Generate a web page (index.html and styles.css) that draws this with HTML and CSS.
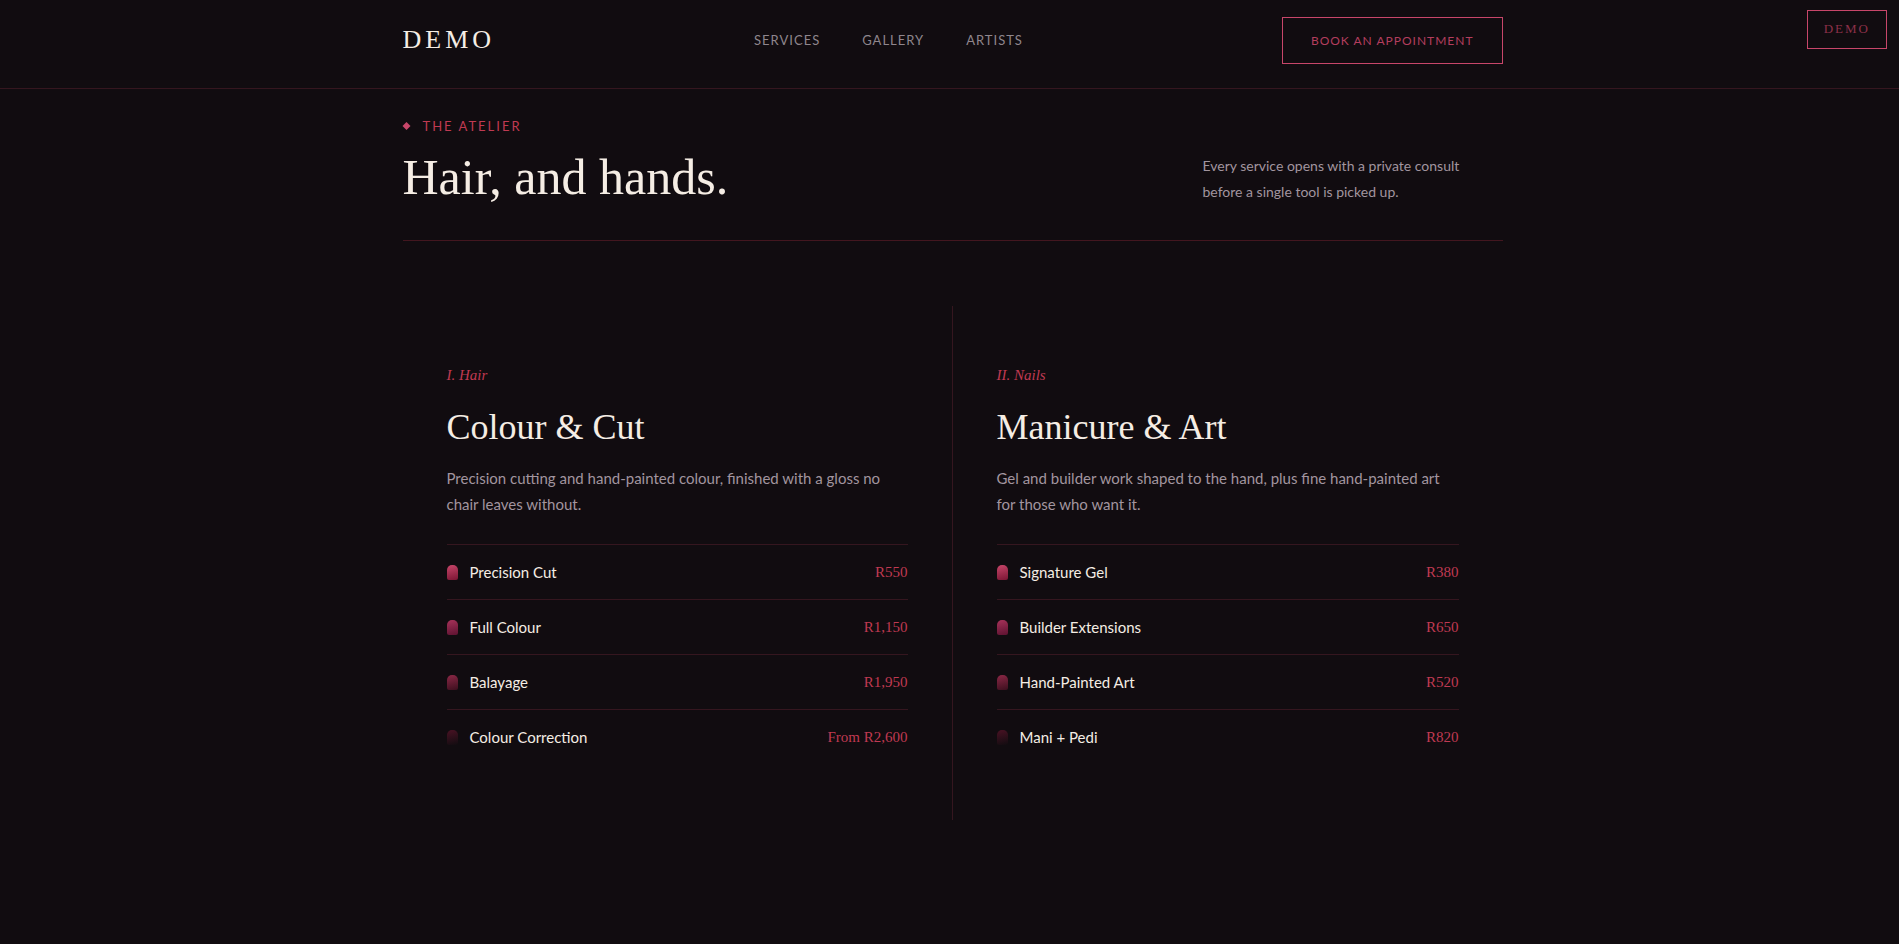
FILE: index.html
```html
<!DOCTYPE html>
<html lang="en">
<head>
<meta charset="utf-8">
<meta name="viewport" content="width=device-width, initial-scale=1">
<title>Demo - Services</title>
<link rel="stylesheet" href="styles.css">
</head>
<body>
<header class="site-header">
  <div class="wrap nav">
    <a class="logo" href="#">DEMO</a>
    <nav class="nav-links">
      <a href="#services">Services</a>
      <a href="#gallery">Gallery</a>
      <a href="#artists">Artists</a>
    </nav>
    <button type="button" class="btn">Book an appointment</button>
  </div>
</header>
<div class="demo-tag">DEMO</div>

<main class="wrap" id="services">
  <div class="section-head">
    <div>
      <p class="eyebrow"><svg width="8" height="8" viewBox="0 0 8 8"><path d="M3.500 0l4 4-4 4-4-4z"/></svg>The Atelier</p>
      <h1>Hair, and hands.</h1>
    </div>
    <p class="intro">Every service opens with a private consult before a single tool is picked up.</p>
  </div>

  <div class="columns">
    <section class="col">
      <p class="num">I. Hair</p>
      <h2>Colour &amp; Cut</h2>
      <p class="desc">Precision cutting and hand-painted colour, finished with a gloss no chair leaves without.</p>
      <ul class="prices">
        <li><span class="nail n1"></span><span class="name">Precision Cut</span><span class="price">R550</span></li>
        <li><span class="nail n2"></span><span class="name">Full Colour</span><span class="price">R1,150</span></li>
        <li><span class="nail n3"></span><span class="name">Balayage</span><span class="price">R1,950</span></li>
        <li><span class="nail n4"></span><span class="name">Colour Correction</span><span class="price">From R2,600</span></li>
      </ul>
    </section>
    <section class="col">
      <p class="num">II. Nails</p>
      <h2>Manicure &amp; Art</h2>
      <p class="desc">Gel and builder work shaped to the hand, plus fine hand-painted art for those who want it.</p>
      <ul class="prices">
        <li><span class="nail n1"></span><span class="name">Signature Gel</span><span class="price">R380</span></li>
        <li><span class="nail n2"></span><span class="name">Builder Extensions</span><span class="price">R650</span></li>
        <li><span class="nail n3"></span><span class="name">Hand-Painted Art</span><span class="price">R520</span></li>
        <li><span class="nail n4"></span><span class="name">Mani + Pedi</span><span class="price">R820</span></li>
      </ul>
    </section>
  </div>
</main>
</body>
</html>
```
FILE: styles.css
```css
:root{
  --bg:#110c10;
  --cream:#f5ede4;
  --muted:#a2959f;
  --rose:#c8466a;
  --red:#c03a52;
  --line:#35161f;
  --serif:"Liberation Serif", serif;
  --sans:Lato, sans-serif;
}
*{ box-sizing:border-box; margin:0; padding:0;}
body{ background:var(--bg); color:var(--cream); font-family:var(--sans); font-size:15px; line-height:26px;}
a{ color:inherit; text-decoration:none;}
ul{ list-style:none;}
.wrap{ max-width:1106px; margin:0 auto; padding-left:6px;}

/* header */
.site-header{ border-bottom:1px solid var(--line);}
.nav{ display:flex; justify-content:space-between; align-items:center; height:88px; padding-bottom:8px;}
.logo{ font-family:var(--serif); font-size:26px; letter-spacing:4px;}
.nav-links{ display:flex; gap:42px; font-size:13px; letter-spacing:1px; text-transform:uppercase; color:#8f868d;}
.btn{ height:47px; padding:0 28px; background:none; border:1px solid var(--rose); color:#b43e5e; font-family:var(--sans); font-size:12px; letter-spacing:1px; text-transform:uppercase; cursor:pointer;}
.demo-tag{ position:absolute; top:10px; right:12px; height:39px; padding:0 16px; border:1px solid var(--rose); color:#8c3049; font-family:var(--serif); font-size:13px; line-height:36px; letter-spacing:2px;}

/* section head */
.section-head{ display:flex; justify-content:space-between; align-items:flex-end; padding:24px 0 35px; border-bottom:1px solid #43161f;}
.eyebrow{ display:flex; align-items:center; gap:12px; font-size:13px; letter-spacing:2px; text-transform:uppercase; color:var(--red);}
.eyebrow svg{ fill:var(--rose); overflow:visible;}
h1{ margin-top:10px; font-family:var(--serif); font-size:50px; line-height:56px; font-weight:400;}
.intro{ width:300px; font-size:14px; color:var(--muted);}

/* services */
.columns{ display:grid; grid-template-columns:1fr 1fr; margin-top:65px;}
.col{ padding:56px 44px;}
.col:first-child{ border-right:1px solid var(--line);}
.num{ font-family:var(--serif); font-size:15px; font-style:italic; color:var(--red);}
h2{ margin:17px 0 16px; font-family:var(--serif); font-size:36px; line-height:44px; font-weight:400;}
.desc{ margin-bottom:27px; color:var(--muted);}
.prices li{ display:flex; align-items:center; gap:12px; height:55px; border-top:1px solid var(--line);}
.nail{ width:11px; height:15px; border-radius:5px 5px 2px 2px;}
.n1{ background:linear-gradient(165deg, #c8466a, #7a1533);}
.n2{ background:linear-gradient(165deg, #a8325a, #5c1230);}
.n3{ background:linear-gradient(165deg, #8c2846, #3c0f1e);}
.n4{ background:linear-gradient(165deg, #4a1224, #110c10);}
.name{ flex:1;}
.price{ font-family:var(--serif); font-size:15px; color:var(--red);}
```
